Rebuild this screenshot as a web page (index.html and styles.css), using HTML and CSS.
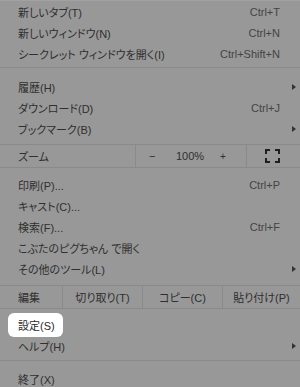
FILE: index.html
```html
<!DOCTYPE html>
<html lang="ja">
<head>
    <meta charset="UTF-8">
    <meta name="viewport" content="width=device-width, initial-scale=1.0">
    <title>Menu</title>
    <link rel="stylesheet" href="styles.css">
</head>
<body>
    <div class="menu">
        <div class="item first"><span class="label">新しいタブ(T)</span><span class="key">Ctrl+T</span><span class="sub"></span></div>
        <div class="item"><span class="label">新しいウィンドウ(N)</span><span class="key">Ctrl+N</span><span class="sub"></span></div>
        <div class="item"><span class="label">シークレット ウィンドウを開く(I)</span><span class="key">Ctrl+Shift+N</span><span class="sub"></span></div>

        <div class="sep"></div>

        <div class="item"><span class="label">履歴(H)</span><span class="key"></span><span class="sub"><i class="arrow"></i></span></div>
        <div class="item"><span class="label">ダウンロード(D)</span><span class="key">Ctrl+J</span><span class="sub"></span></div>
        <div class="item"><span class="label">ブックマーク(B)</span><span class="key"></span><span class="sub"><i class="arrow"></i></span></div>

        <!-- zoom row -->
        <div class="zoom">
            <div class="zoom-label">ズーム</div>
            <div class="zoom-ctrl">
                <span class="minus">−</span>
                <span class="pct">100%</span>
                <span class="plus">+</span>
            </div>
            <div class="zoom-full">
                <svg width="15" height="14" viewBox="0 0 15 14">
                    <path d="M1 5V1h4M10 1h4v4M14 9v4h-4M5 13H1V9" fill="none" stroke="#1f1f1f" stroke-width="2"/>
                </svg>
            </div>
        </div>

        <div class="item"><span class="label">印刷(P)...</span><span class="key">Ctrl+P</span><span class="sub"></span></div>
        <div class="item"><span class="label">キャスト(C)...</span><span class="key"></span><span class="sub"></span></div>
        <div class="item"><span class="label">検索(F)...</span><span class="key">Ctrl+F</span><span class="sub"></span></div>
        <div class="item"><span class="label">こぶたのピグちゃん で開く</span><span class="key"></span><span class="sub"></span></div>
        <div class="item"><span class="label">その他のツール(L)</span><span class="key"></span><span class="sub"><i class="arrow"></i></span></div>

        <!-- edit row -->
        <div class="edit">
            <div class="edit-label">編集</div>
            <div class="edit-cell">切り取り(T)</div>
            <div class="edit-cell">コピー(C)</div>
            <div class="edit-cell">貼り付け(P)</div>
        </div>

        <div class="item settings"><span class="label"><span class="hl">設定(S)</span></span><span class="key"></span><span class="sub"></span></div>
        <div class="item"><span class="label">ヘルプ(H)</span><span class="key"></span><span class="sub"><i class="arrow"></i></span></div>

        <div class="sep last-sep"></div>

        <div class="item"><span class="label">終了(X)</span><span class="key"></span><span class="sub"></span></div>
    </div>
</body>
</html>
```

FILE: styles.css
```css
html, body {
    margin: 0;
    padding: 0;
}

body {
    background-color: #989898;
    font-family: "Liberation Sans", "Noto Sans CJK JP", sans-serif;
    font-size: 11px;
    color: #2f2f2f;
    font-feature-settings: "palt";
    width: 300px;
    height: 387px;
    overflow: hidden;
}

.menu {
    border-top: 1px solid #a2a2a2;
}

.item {
    display: flex;
    align-items: center;
    height: 21px;
    padding-left: 18px;
}

.label {
    flex: 1;
    white-space: nowrap;
}

.key {
    color: #444;
}

.sub {
    width: 20px;
    display: flex;
    justify-content: flex-end;
}

.arrow {
    width: 0;
    height: 0;
    border-top: 3px solid transparent;
    border-bottom: 3px solid transparent;
    border-left: 4px solid #333;
    margin-right: 4px;
}

.sep {
    height: 1px;
    background-color: #8a8a8a;
    margin: 3px 0 8px;
}

.last-sep {
    margin: 4px 0 7px;
}

/* zoom row */
.zoom {
    display: flex;
    height: 22px;
    margin: 5px 0 6px;
    border-top: 1px solid #8a8a8a;
    border-bottom: 1px solid #8a8a8a;
}

.zoom-label {
    width: 117px;
    padding-left: 18px;
    display: flex;
    align-items: center;
    border-right: 1px solid #8a8a8a;
}

.zoom-ctrl {
    width: 110px;
    display: flex;
    align-items: center;
    border-right: 1px solid #8a8a8a;
}

.minus {
    margin-left: 13px;
    width: 12px;
}

.pct {
    margin-left: 15px;
    width: 44px;
}

.plus {
    font-size: 10px;
}

.zoom-full {
    flex: 1;
    display: flex;
    align-items: center;
    justify-content: center;
    padding-right: 2px;
}

/* edit row */
.edit {
    display: flex;
    height: 22px;
    margin: 6px 0 5px;
    border-top: 1px solid #8a8a8a;
    border-bottom: 1px solid #8a8a8a;
}

.edit-label {
    width: 44px;
    padding-left: 18px;
    display: flex;
    align-items: center;
    border-right: 1px solid #8a8a8a;
}

.edit-cell {
    width: 79px;
    display: flex;
    align-items: center;
    justify-content: center;
    border-right: 1px solid #8a8a8a;
}

.edit-cell:last-child {
    flex: 1;
    border-right: none;
}

/* highlighted item */
.hl {
    display: inline-block;
    background-color: #fff;
    color: #2a2a2a;
    border-radius: 6px;
    margin-left: -10px;
    padding: 4px 8px 4px 10px;
}
```
